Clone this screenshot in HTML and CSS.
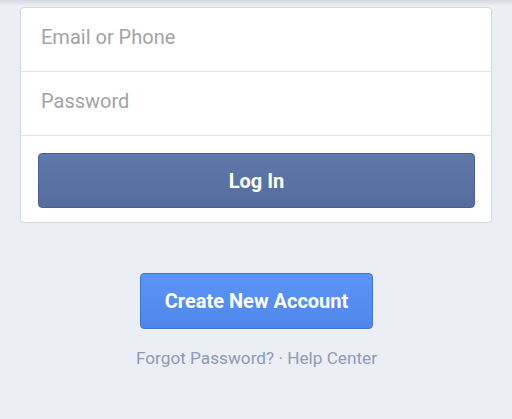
FILE: index.html
```html
<!DOCTYPE html>
<html>
<head>
<meta charset="utf-8">
<link rel="stylesheet" href="styles.css">
</head>
<body>
<div class="topbar"></div>
<main class="page">
  <form class="card">
    <div class="field"><input class="input" type="text" placeholder="Email or Phone"></div>
    <div class="field"><input class="input" type="password" placeholder="Password"></div>
    <div class="actions"><button class="login" type="button">Log In</button></div>
  </form>
  <div class="signup">
    <button class="create" type="button">Create New Account</button>
  </div>
  <p class="links"><a class="link">Forgot Password?</a> · <a class="link">Help Center</a></p>
</main>
</body>
</html>
```

FILE: styles.css
```css
* { box-sizing: border-box; }
html, body { margin: 0; padding: 0; }
body {
  background: #eceef5;
  font-family: Roboto, "Liberation Sans", sans-serif;
  width: 512px;
  height: 419px;
  overflow: hidden;
}
.topbar {
  height: 6px;
  background: linear-gradient(#d5d8df, #eceef5);
}
.page {
  padding: 1px 20px 0 20px;
}
.card {
  margin: 0;
  background: #fff;
  border: 1px solid #d3d6dc;
  border-radius: 4px;
  display: flex;
  flex-direction: column;
}
.field {
  height: 64px;
  padding-bottom: 6px;
  border-bottom: 1px solid #e1e2e5;
  display: flex;
  align-items: center;
}
.input {
  border: 0;
  outline: 0;
  background: transparent;
  width: 100%;
  padding: 0 20px;
  font-family: inherit;
  font-size: 20px;
  color: #333;
}
.input::placeholder { color: #a3a3a3; }
.actions {
  padding: 17px 16px 14px 17px;
}
.login {
  display: block;
  width: 100%;
  height: 55px;
  border: 1px solid #4a5f8f;
  border-radius: 4px;
  background: linear-gradient(#6078aa, #566c9e);
  color: #fff;
  font-family: inherit;
  font-weight: 700;
  font-size: 20px;
}
.signup {
  display: flex;
  justify-content: center;
  margin-top: 50px;
  padding-left: 1px;
}
.create {
  height: 56px;
  padding: 0 24px;
  border: 1px solid #3f73d8;
  border-radius: 4px;
  background: linear-gradient(#5b95f6, #4f86ea);
  color: #fff;
  font-family: inherit;
  font-weight: 700;
  font-size: 20px;
}
.links {
  margin: 19px 0 0 0;
  text-align: center;
  padding-left: 1px;
  color: #8e9ab7;
  font-size: 17.2px;
}
.link { color: #8e9ab7; }
```
